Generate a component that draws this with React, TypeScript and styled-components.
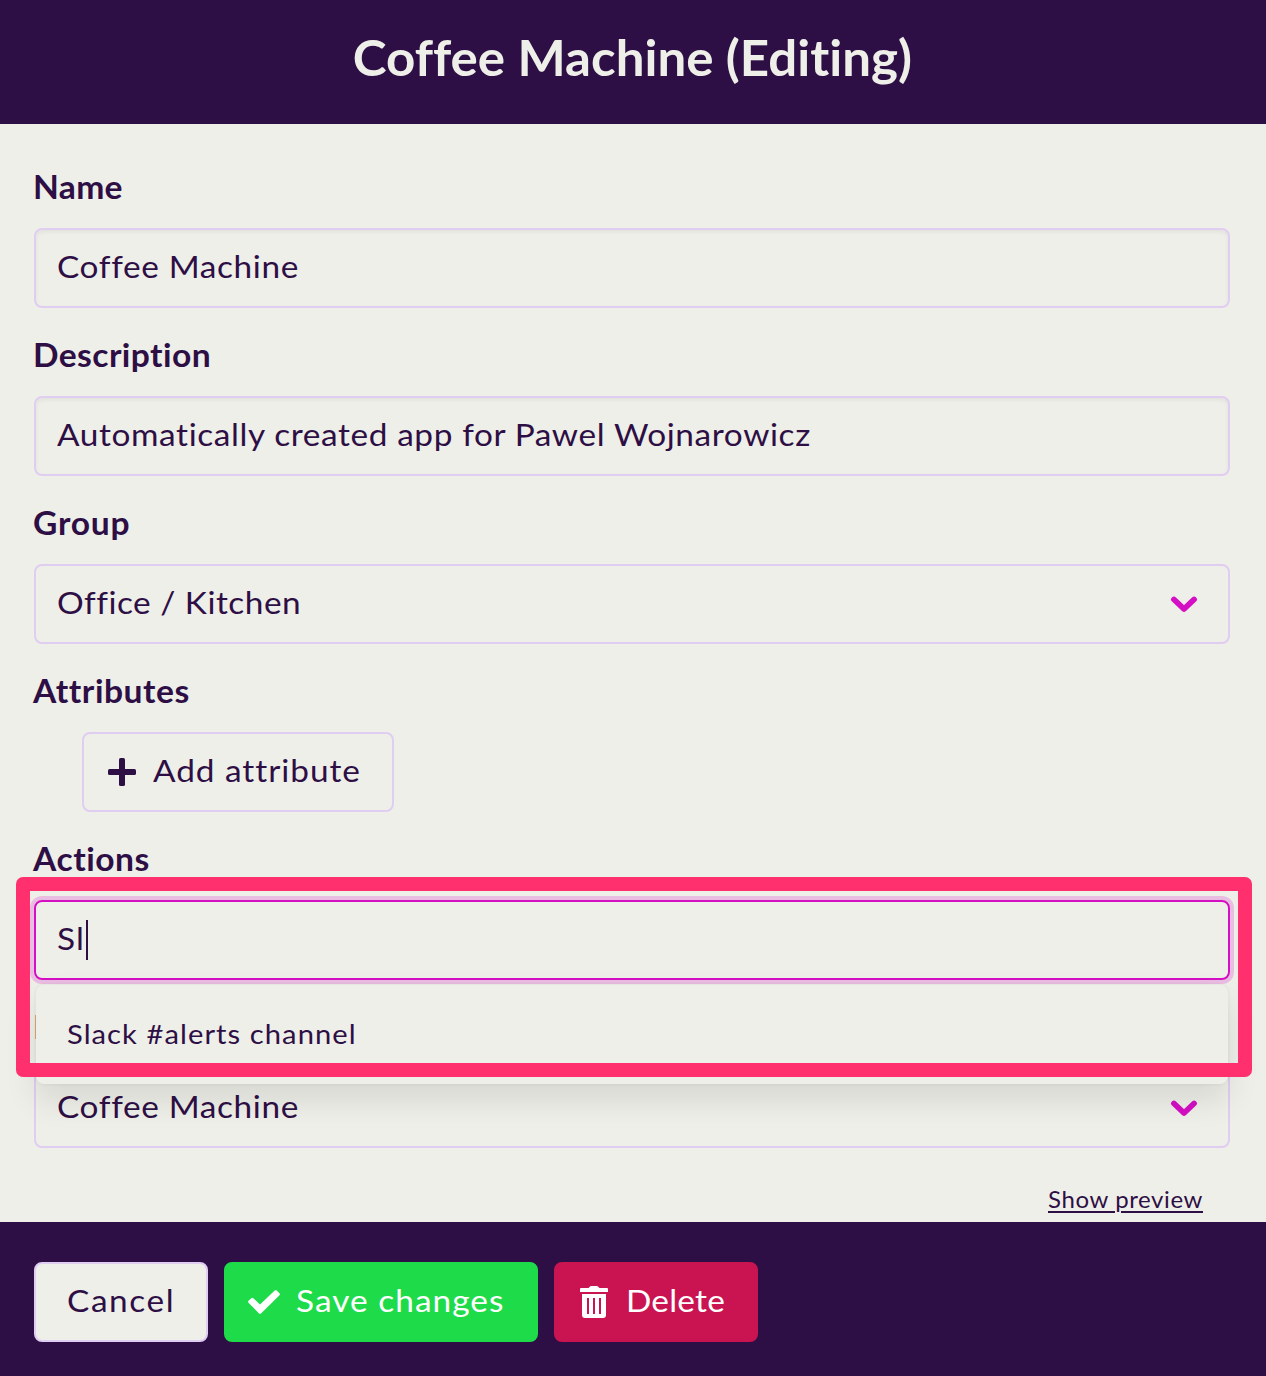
import React from "react";
import styled, { createGlobalStyle } from "styled-components";

const INK = "#2e0f45";
const PAPER = "#efefe9";
const LILAC = "#e0cdf2";
const MAGENTA = "#d40fc4";

const Global = createGlobalStyle`
  * { box-sizing: border-box; }
  body { margin: 0; background: ${PAPER}; overflow: hidden; }
`;

const Page = styled.div`
  width: 1266px;
  height: 1376px;
  display: flex;
  flex-direction: column;
  background: ${PAPER};
  color: ${INK};
  font-family: Lato, "Noto Sans", sans-serif;
  font-size: 31.5px;
  font-variant-ligatures: none;
`;

const Header = styled.header`
  flex: 0 0 124px;
  display: flex;
  justify-content: center;
  padding: 27px 2px 0 0;
  background: ${INK};
`;

const Title = styled.h1`
  margin: 0;
  color: ${PAPER};
  font-size: 49px;
  line-height: 60px;
  font-weight: 700;
  white-space: nowrap;
  transform: scaleX(1.042);
`;

const Form = styled.main`
  flex: 1;
  padding: 44px 36px 0 34px;
`;

const Field = styled.div`
  position: relative;
  height: 168px;
`;

const Text = styled.span<{ $ls?: number }>`
  display: block;
  padding-bottom: 5px;
  letter-spacing: ${(p) => p.$ls ?? 0}px;
  white-space: pre;
  transform: scaleX(1.06);
  transform-origin: left center;
`;

const Label = styled.label<{ $ls?: number }>`
  display: block;
  width: max-content;
  height: 40px;
  margin: 0 0 20px -1px;
  font-size: 32px;
  font-weight: 700;
  line-height: 37px;
  letter-spacing: ${(p) => p.$ls ?? 0}px;
  transform: scaleX(1.05);
  transform-origin: left center;
`;

const Control = styled.div<{ $kind?: "input" | "select" | "focus" }>`
  display: flex;
  align-items: center;
  justify-content: space-between;
  height: 80px;
  padding: 0 30px 0 21px;
  border: 2px solid ${(p) => (p.$kind === "focus" ? MAGENTA : LILAC)};
  border-radius: 8px;
  box-shadow: ${(p) =>
    p.$kind === "focus"
      ? "0 0 0 4px rgba(212, 15, 196, 0.22)"
      : p.$kind === "input"
        ? "inset 0 2px 4px rgba(0, 0, 0, 0.06)"
        : "none"};
`;

const Typed = styled.span`
  display: flex;
  align-items: center;
`;

const Caret = styled.span`
  width: 2px;
  height: 40px;
  margin-left: 2px;
  background: ${INK};
`;

const Menu = styled.div`
  position: absolute;
  z-index: 2;
  top: 145px;
  left: 2px;
  right: 2px;
  height: 99px;
  display: flex;
  align-items: center;
  padding: 2px 0 0 31px;
  border-radius: 8px;
  background: ${PAPER};
  box-shadow: 0 0 0 2px rgba(0, 0, 0, 0.02), 0 16px 32px rgba(0, 0, 0, 0.1);
  font-size: 27.5px;
`;

const Highlight = styled.div`
  position: absolute;
  z-index: 3;
  top: 37px;
  left: -18px;
  right: -22px;
  height: 200px;
  border-radius: 7px;
  display: flex;
  border: 14px solid #ff306d;
`;

const Button = styled.button<{ $bg: string; $fg: string; $line: string; $w: number; $pad: number }>`
  display: flex;
  align-items: center;
  width: ${(p) => p.$w}px;
  height: 80px;
  margin: 0;
  padding: 0 0 0 ${(p) => p.$pad}px;
  border: 2px solid ${(p) => p.$line};
  border-radius: 8px;
  background: ${(p) => p.$bg};
  color: ${(p) => p.$fg};
  font: inherit;
  font-variant-ligatures: none;
  line-height: 40px;
`;

const AddRow = styled.div`
  padding-left: 48px;
`;

const IconSlot = styled.span<{ $gap: number }>`
  display: flex;
  margin-right: ${(p) => p.$gap}px;
`;

const PreviewRow = styled.div`
  display: flex;
  justify-content: flex-end;
  padding: 0 27px 0 0;
  margin-top: 6px;
`;

const PreviewLink = styled.a`
  font-size: 24px;
  line-height: 34px;
  letter-spacing: 0.6px;
  text-decoration: underline;
  text-decoration-thickness: 2px;
  text-underline-offset: 3px;
`;

const Footer = styled.footer`
  flex: 0 0 154px;
  display: flex;
  gap: 16px;
  padding: 40px 34px 0;
  background: ${INK};
`;

const Chevron = () => (
  <svg width="28" height="18" viewBox="0 0 28 18" fill="none" stroke={MAGENTA} strokeWidth="5.8" strokeLinecap="round" strokeLinejoin="round">
    <path d="M4 4.5 14 14 24 4.5" />
  </svg>
);

const Plus = () => (
  <svg width="28" height="28" viewBox="0 0 28 28" fill={INK}>
    <rect x="11" y="0" width="6" height="28" rx="1.6" />
    <rect x="0" y="11" width="28" height="6" rx="1.6" />
  </svg>
);

const Check = () => (
  <svg width="32" height="24" viewBox="0 0 32 24" fill="#fff">
    <path d="M.5 10.8 3.3 8.2q1-.8 2 0L12 14.6 26.7.5q1-.8 2 0L31.5 3.2q.8 1 0 2L13 23.4q-1 .9-2 0L.5 12.8q-.8-1 0-2Z" />
  </svg>
);

const Trash = () => (
  <svg width="28" height="32" viewBox="0 0 28 32" fill="#fff">
    <path d="M1 2H8.500L10 0.500Q10.500 0 11.200 0H16.800Q17.500 0 18 .5L19.500 2H27Q28 2 28 3V6H0V3Q0 2 1 2Z" />
    <path fillRule="evenodd" d="M2 8H26V29Q26 32 23 32H5Q2 32 2 29ZM7 12V28H9V12ZM13 12V28H15V12ZM19 12V28H21V12Z" />
  </svg>
);

export default function App() {
  return (
    <Page>
      <Global />
      <Header>
        <Title>Coffee Machine (Editing)</Title>
      </Header>
      <Form>
        <Field>
          <Label $ls={0.3}>Name</Label>
          <Control $kind="input"><Text $ls={0.6}>Coffee Machine</Text></Control>
        </Field>
        <Field>
          <Label $ls={0.4}>Description</Label>
          <Control $kind="input"><Text $ls={0.57}>Automatically created app for Pawel Wojnarowicz</Text></Control>
        </Field>
        <Field>
          <Label $ls={0.7}>Group</Label>
          <Control $kind="select"><Text $ls={0.46}>Office / Kitchen</Text><Chevron /></Control>
        </Field>
        <Field>
          <Label $ls={0.5}>Attributes</Label>
          <AddRow>
            <Button $bg="transparent" $fg={INK} $line={LILAC} $w={312} $pad={24}>
              <IconSlot $gap={17}><Plus /></IconSlot>
              <Text $ls={0.9}>Add attribute</Text>
            </Button>
          </AddRow>
        </Field>
        <Field>
          <Label $ls={0.5}>Actions</Label>
          <Control $kind="focus"><Typed><Text $ls={1.2}>Sl</Text><Caret /></Typed></Control>
          <Menu><Text $ls={1}>Slack #alerts channel</Text></Menu>
          <Highlight />
        </Field>
        <Field>
          <Label>I</Label>
          <Control $kind="select"><Text $ls={0.6}>Coffee Machine</Text><Chevron /></Control>
        </Field>
        <PreviewRow><PreviewLink>Show preview</PreviewLink></PreviewRow>
      </Form>
      <Footer>
        <Button $bg={PAPER} $fg={INK} $line={LILAC} $w={174} $pad={31}><Text $ls={1.5}>Cancel</Text></Button>
        <Button $bg="#1edb4a" $fg="#fff" $line="#1edb4a" $w={314} $pad={22}>
          <IconSlot $gap={16}><Check /></IconSlot>
          <Text $ls={0.98}>Save changes</Text>
        </Button>
        <Button $bg="#ca1452" $fg="#fff" $line="#ca1452" $w={204} $pad={24}>
          <IconSlot $gap={18}><Trash /></IconSlot>
          <Text $ls={0.2}>Delete</Text>
        </Button>
      </Footer>
    </Page>
  );
}
